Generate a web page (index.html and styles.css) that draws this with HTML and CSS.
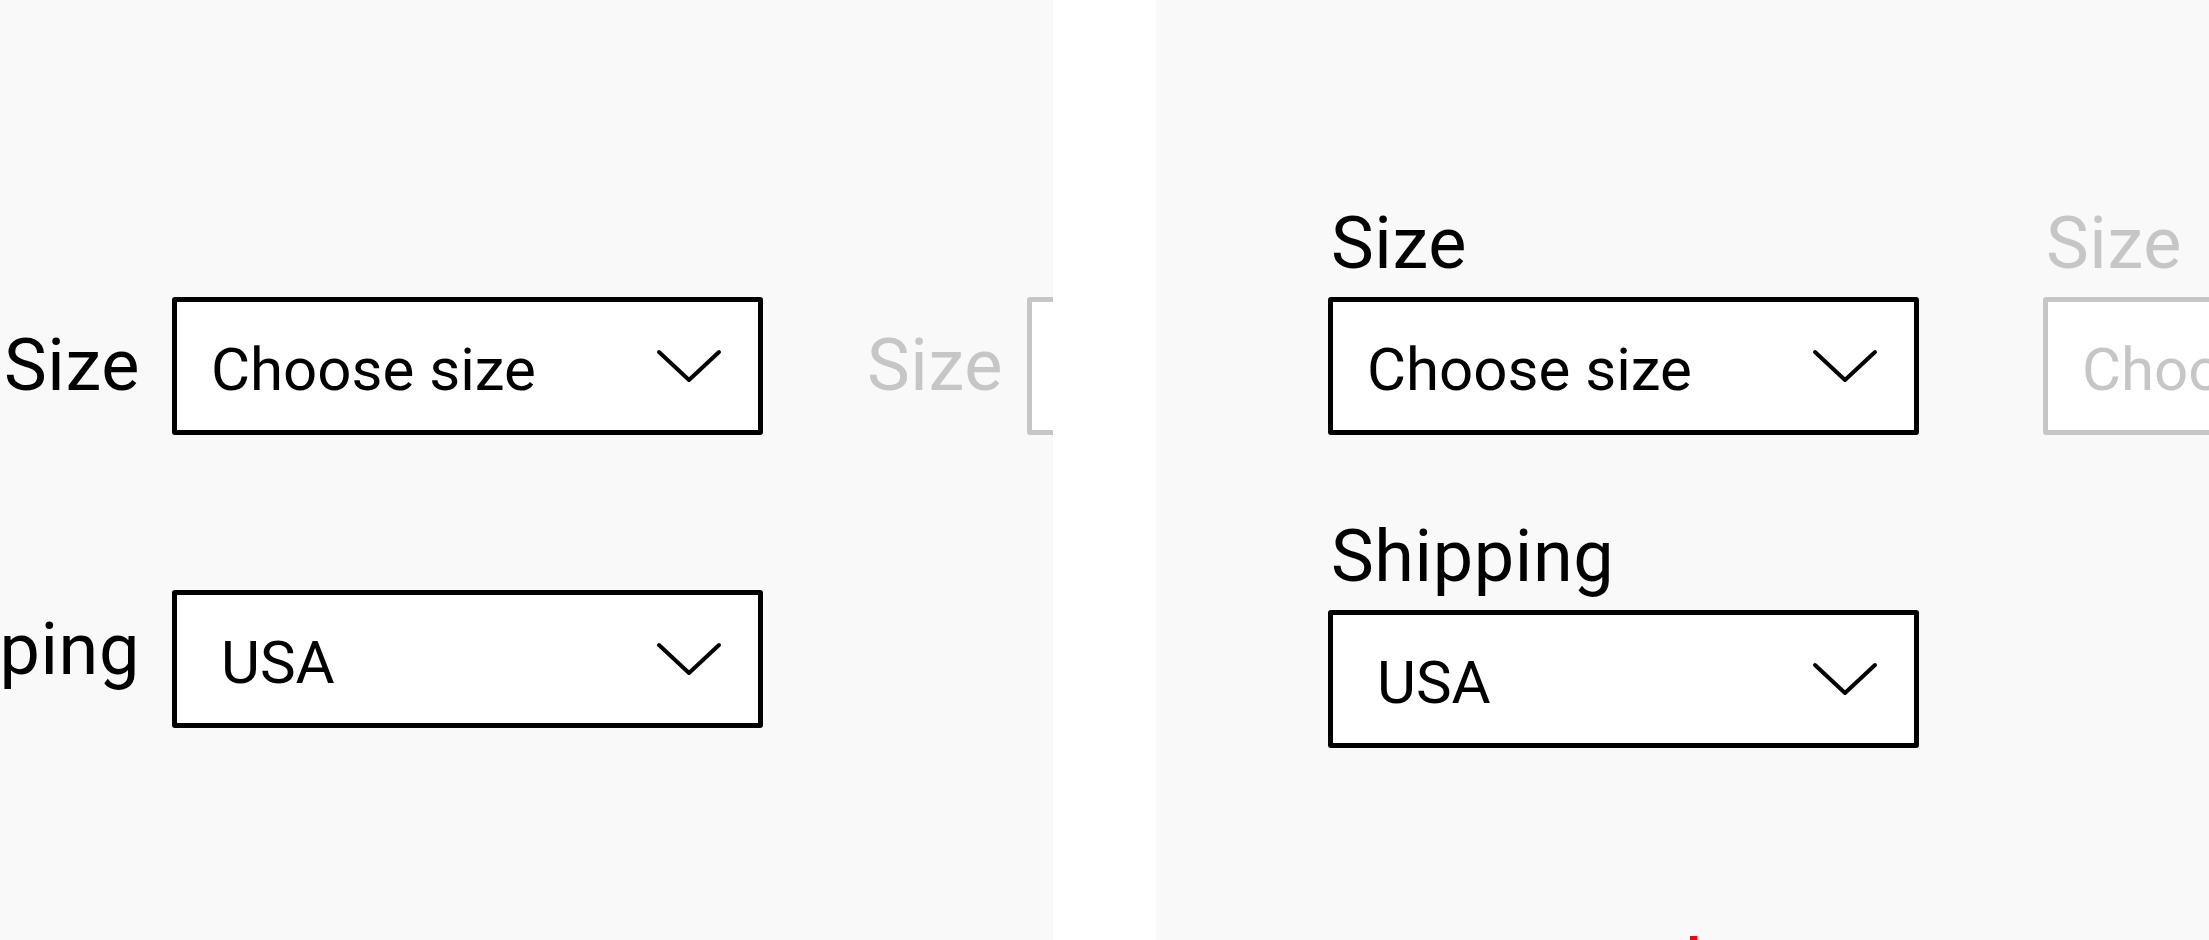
FILE: index.html
```html
<!DOCTYPE html>
<html lang="en">
<head>
<meta charset="utf-8">
<title>Select fields</title>
<link rel="stylesheet" href="styles.css">
</head>
<body>
<div class="page">
  <section class="panel panel-left">
    <div class="inline-form">
      <div class="field-grid">
        <label class="lbl">Size</label>
        <div class="select"><span class="value">Choose size</span><svg class="chev" viewBox="0 0 66 34"><polyline points="3,3 33,31 63,3"/></svg></div>
        <label class="lbl lbl-raised">Shipping</label>
        <div class="select"><span class="value value-usa">USA</span><svg class="chev" viewBox="0 0 66 34"><polyline points="3,3 33,31 63,3"/></svg></div>
      </div>
      <div class="field-grid field-grid-disabled is-disabled">
        <label class="lbl">Size</label>
        <div class="select"><span class="value">Choose size</span><svg class="chev" viewBox="0 0 66 34"><polyline points="3,3 33,31 63,3"/></svg></div>
      </div>
    </div>
  </section>
  <div class="divider"></div>
  <section class="panel panel-right">
    <div class="stack-form">
      <div class="field-col">
        <label class="lbl lbl-top">Size</label>
        <div class="select"><span class="value">Choose size</span><svg class="chev" viewBox="0 0 66 34"><polyline points="3,3 33,31 63,3"/></svg></div>
        <label class="lbl lbl-top lbl-next">Shipping</label>
        <div class="select"><span class="value value-usa">USA</span><svg class="chev" viewBox="0 0 66 34"><polyline points="3,3 33,31 63,3"/></svg></div>
      </div>
      <div class="field-col field-col-disabled is-disabled">
        <label class="lbl lbl-top">Size</label>
        <div class="select"><span class="value">Choose size</span><svg class="chev" viewBox="0 0 66 34"><polyline points="3,3 33,31 63,3"/></svg></div>
      </div>
    </div>
    <div class="error-mark"></div>
  </section>
</div>
</body>
</html>
```

FILE: styles.css
```css
html, body {
  margin: 0;
  padding: 0;
  background: #ffffff;
}

body {
  font-family: Roboto, "Liberation Sans", Arial, sans-serif;
  color: #000000;
}

.page {
  display: flex;
  width: 2209px;
  height: 940px;
  overflow: hidden;
}

.panel {
  background: #f9f9f9;
  overflow: hidden;
  height: 940px;
}

.panel-left {
  width: 1053px;
  flex: 0 0 1053px;
}

.divider {
  flex: 0 0 103px;
  background: #ffffff;
}

.panel-right {
  flex: 1 1 auto;
  display: flex;
  flex-direction: column;
}

/* left: label beside field */
.inline-form {
  display: flex;
  align-items: flex-start;
  padding-top: 297px;
  margin-left: -160px;
}

.field-grid {
  display: grid;
  grid-template-columns: 300px 591px;
  grid-auto-rows: 138px;
  column-gap: 32px;
  row-gap: 155px;
  flex: 0 0 auto;
}

.field-grid-disabled {
  grid-template-columns: auto 591px;
  margin-left: 104px;
  column-gap: 24px;
}

.field-grid .lbl {
  justify-self: end;
  align-self: center;
}

.field-grid .lbl-raised {
  margin-bottom: 18px;
}

.lbl {
  display: block;
  font-size: 72px;
  line-height: 80px;
  letter-spacing: 0.6px;
  white-space: nowrap;
}

/* right: label on top */
.stack-form {
  display: flex;
  align-items: flex-start;
  padding-top: 204px;
  padding-left: 172px;
}

.field-col {
  display: flex;
  flex-direction: column;
  width: 591px;
  flex: 0 0 591px;
}

.field-col-disabled {
  margin-left: 124px;
}

.lbl-top {
  margin-bottom: 13px;
  padding-left: 3px;
}

.lbl-next {
  margin-top: 82px;
}

/* select control */
.select {
  box-sizing: border-box;
  width: 591px;
  height: 138px;
  border: 5px solid #000000;
  border-radius: 3px;
  background: #ffffff;
  display: flex;
  align-items: center;
  justify-content: space-between;
  padding: 8px 36px 0 34px;
}

.value {
  font-size: 60px;
  line-height: 1;
  white-space: nowrap;
}

.value-usa {
  padding-left: 10px;
}

.chev {
  width: 66px;
  height: 34px;
  flex: 0 0 66px;
  margin-top: -8px;
  fill: none;
  stroke: #000000;
  stroke-width: 4;
  stroke-linecap: round;
  stroke-linejoin: round;
}

.is-disabled .lbl,
.is-disabled .value {
  color: #c6c6c6;
}

.is-disabled .select {
  border-color: #c6c6c6;
}

.is-disabled .chev {
  stroke: #c6c6c6;
}

.error-mark {
  width: 7px;
  height: 4px;
  background: #ff0000;
  margin-top: auto;
  margin-left: 534px;
}
```
